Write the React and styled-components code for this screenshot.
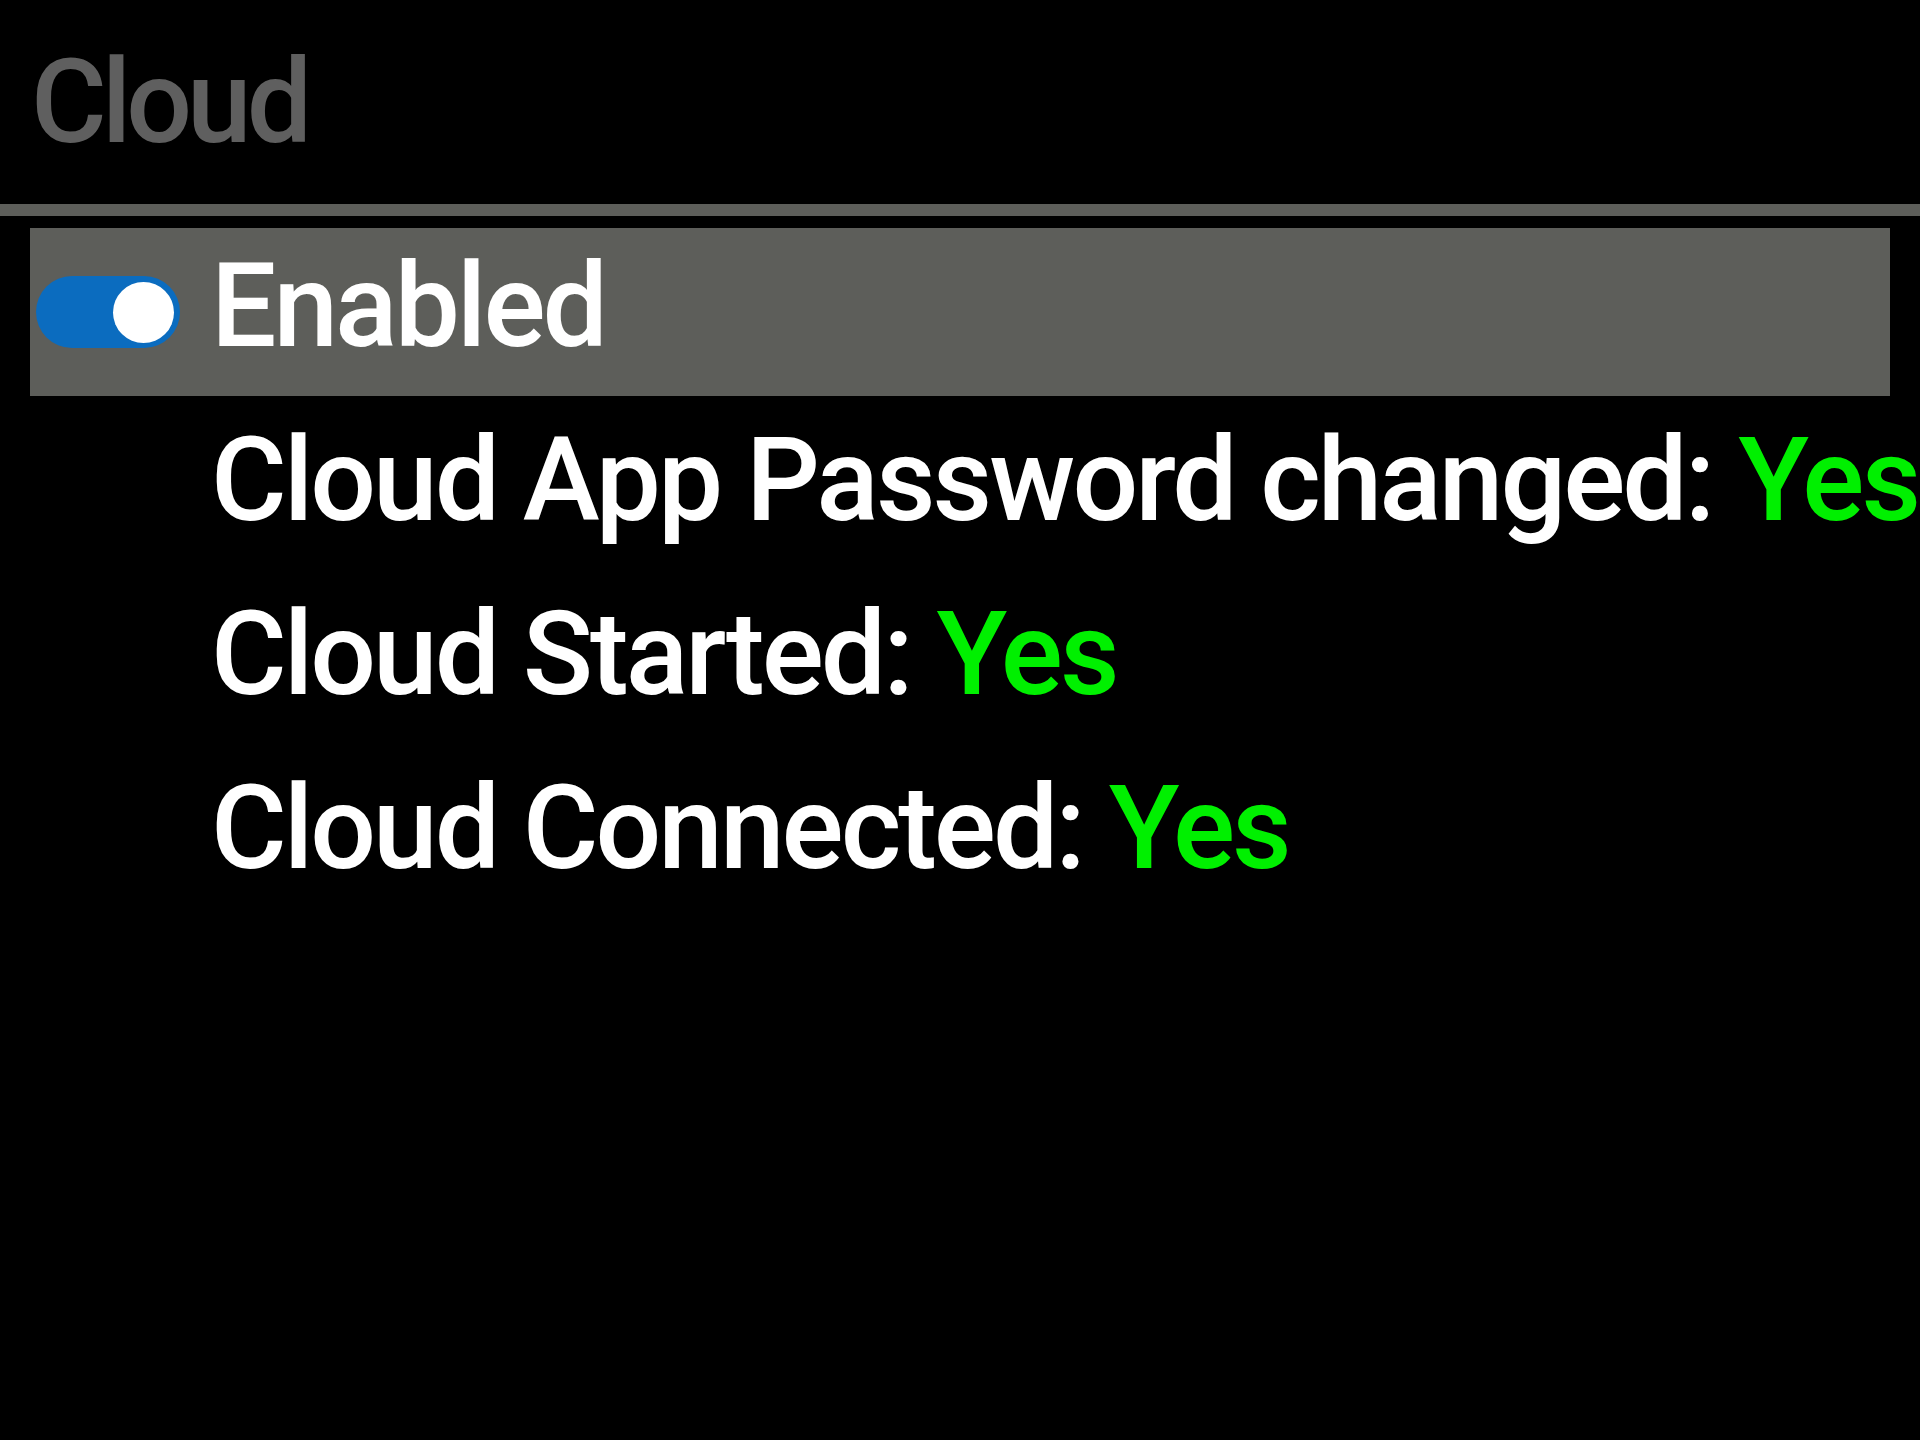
import React from "react";
import styled, { createGlobalStyle } from "styled-components";

const GlobalStyle = createGlobalStyle`
  html, body {
    margin: 0;
    padding: 0;
    background: #000;
    overflow: hidden;
  }
  body {
    font-family: Roboto, "Liberation Sans", sans-serif;
  }
`;

const Screen = styled.div`
  width: 1920px;
  height: 1440px;
  background: #000;
  overflow: hidden;
`;

const Header = styled.div`
  height: 204px;
  display: flex;
  align-items: center;
  padding-left: 31px;
`;

const Title = styled.div`
  font-size: 116px;
  font-weight: 500;
  letter-spacing: -5px;
  color: #5f5f5f;
  line-height: 1;
`;

const Divider = styled.div`
  height: 12px;
  background: #5d5e5a;
`;

const List = styled.div`
  display: flex;
  flex-direction: column;
  gap: 6px;
  padding: 12px 30px 0 30px;
`;

const Row = styled.div`
  height: 168px;
  display: grid;
  grid-template-columns: 181px 1fr;
  align-items: center;
  background: ${(p) => (p.selected ? "#5d5e5a" : "transparent")};
`;

const Gutter = styled.div`
  display: flex;
  align-items: center;
  padding-left: 6px;
`;

const Toggle = styled.div`
  width: 144px;
  height: 72px;
  border-radius: 36px;
  background: ${(p) => (p.on ? "#0b6cbf" : "#444")};
  display: flex;
  align-items: center;
  justify-content: ${(p) => (p.on ? "flex-end" : "flex-start")};
  padding: 0 6px;
  box-sizing: border-box;
`;

const Knob = styled.div`
  width: 61px;
  height: 61px;
  border-radius: 50%;
  background: #fff;
`;

const Label = styled.div`
  font-size: 116px;
  font-weight: 500;
  letter-spacing: -3px;
  color: #fff;
  white-space: nowrap;
  line-height: 1;
  padding-bottom: 12px;
`;

const Value = styled.span`
  color: #00f000;
`;

const items = [
  { label: "Cloud App Password changed:", value: "Yes" },
  { label: "Cloud Started:", value: "Yes" },
  { label: "Cloud Connected:", value: "Yes" },
];

export default function App() {
  return (
    <Screen>
      <GlobalStyle />
      <Header>
        <Title>Cloud</Title>
      </Header>
      <Divider />
      <List>
        <Row selected>
          <Gutter>
            <Toggle on>
              <Knob />
            </Toggle>
          </Gutter>
          <Label>Enabled</Label>
        </Row>
        {items.map((it) => (
          <Row key={it.label}>
            <Gutter />
            <Label>
              {it.label} <Value>{it.value}</Value>
            </Label>
          </Row>
        ))}
      </List>
    </Screen>
  );
}
